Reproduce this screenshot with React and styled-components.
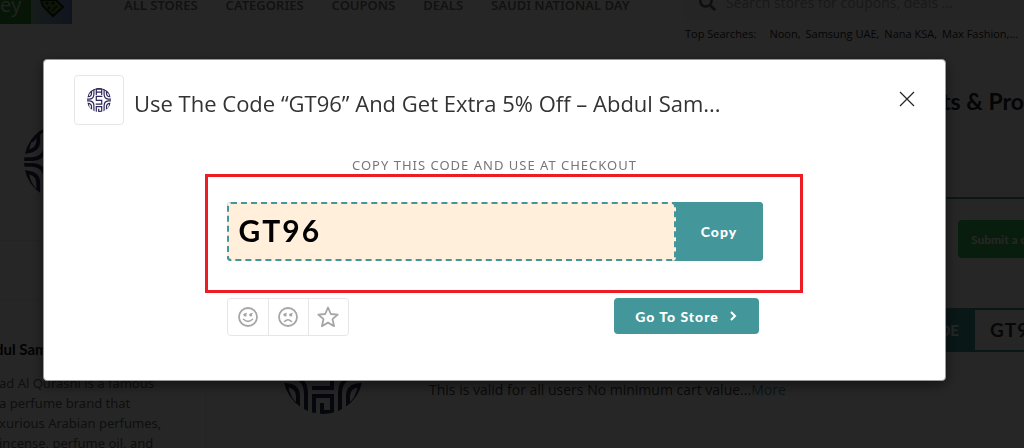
import React, { useState } from "react";
import styled, { createGlobalStyle } from "styled-components";
import { FaSearch } from "react-icons/fa";

const navLinks = ["All Stores", "Categories", "Coupons", "Deals", "Saudi National Day"];
const topSearches = ["Noon,", "Samsung UAE,", "Nana KSA,", "Max Fashion,..."];
const aboutLines = [
  "ad Al Qurashi is a famous",
  "a perfume brand that",
  "xurious Arabian perfumes,",
  "incense, perfume oil, and",
];

function Emblem({ size }) {
  const petals = "M0 43 H9 Q23 44 23 60 V80 M3 51 Q15 52 15 62 V73 Q5 65 3 51 Z";
  return (
    <svg width={size} height={size} viewBox="0 0 80 80" fill="none" stroke="#2d2858" strokeWidth="4" aria-hidden="true">
      <clipPath id={"round" + size}>
        <circle cx="40" cy="40" r="40" />
      </clipPath>
      <g clipPath={`url(#round${size})`}>
        <path d={petals} />
        <path d={petals} transform="matrix(-1 0 0 1 80 0)" />
        <path d={petals} transform="matrix(1 0 0 -1 0 80)" />
        <path d={petals} transform="matrix(-1 0 0 -1 80 80)" />
        <path d="M31 23 V4 H49 V23 M31 14 H49" />
        <path d="M51 28 H31 V41 H49 V54 H29" />
        <path d="M31 80 V62 H49 V78 H39 V69" />
        <path d="M8 18 A39 39 0 0 1 72 18" />
      </g>
    </svg>
  );
}

function Face({ sad }) {
  return (
    <svg width="20" height="20" viewBox="0 0 20 20" fill="none" stroke="#a6a6a6" aria-hidden="true">
      <circle cx="10" cy="10" r="9" strokeWidth="1.8" />
      <circle cx="7.2" cy="8" r="1.5" fill="#a6a6a6" stroke="none" />
      <circle cx="12.8" cy="8" r="1.5" fill="#a6a6a6" stroke="none" />
      <path d="M5 8 L7 6.6 L9 6.2 M11 8 L13 6.6 L15 6.2" strokeWidth="0.8" />
      {sad ? (
        <path d="M6.5 14.5 Q10 11 13.5 14.5" strokeWidth="1.5" strokeLinecap="round" />
      ) : (
        <path d="M5.5 12.2 Q10 16.5 14.5 12.2" strokeWidth="1.5" strokeLinecap="round" />
      )}
    </svg>
  );
}

function App() {
  const [vote, setVote] = useState(null);
  const code = "GT96";

  const copyCode = () => {
    navigator.clipboard.writeText(code);
  };

  return (
    <>
      <GlobalStyle />
      <Page>
        <Header>
          <Logo>
            <LogoName>ey</LogoName>
            <LogoTag>
              <svg width="26" height="18" viewBox="0 0 26 18" aria-hidden="true">
                <path d="M2 0 L4 6 L14 16 L24 7 L17 0 Z" fill="#5c8f38" stroke="#14240c" strokeWidth="2" />
                <circle cx="8" cy="3" r="1.6" fill="#14240c" />
                <circle cx="14" cy="3" r="1.6" fill="#14240c" />
                <circle cx="10" cy="8" r="1.4" fill="#14240c" />
                <path d="M13 11 L18 6" stroke="#14240c" strokeWidth="1.5" />
              </svg>
            </LogoTag>
          </Logo>
          <Nav>
            {navLinks.map((item) => (
              <NavLink key={item} href="#">{item}</NavLink>
            ))}
          </Nav>
          <SearchArea>
            <SearchBox>
              <FaSearch size={17} color="#666" />
              <SearchInput aria-label="Search" placeholder="Search stores for coupons, deals ..." />
            </SearchBox>
            <TopSearches>
              <TopLabel>Top Searches:</TopLabel>
              {topSearches.map((item) => (
                <a key={item} href="#">{item}</a>
              ))}
            </TopSearches>
          </SearchArea>
        </Header>

        <Content>
          <Sidebar>
            <StoreLogo><Emblem size={76} /></StoreLogo>
            <StoreTabs />
            <AboutTitle>dul Sam</AboutTitle>
            {aboutLines.map((line) => (
              <AboutLine key={line}>{line}</AboutLine>
            ))}
          </Sidebar>
          <Main>
            <MainTitle>ts &amp; Pro</MainTitle>
            <Toolbar>
              <SubmitButton>Submit a coupon</SubmitButton>
            </Toolbar>
            <Offer>
              <OfferLogo><Emblem size={80} /></OfferLogo>
              <OfferBody>
                <ShowCode>
                  <ShowLabel>CODE</ShowLabel>
                  <ShowValue>GT96</ShowValue>
                </ShowCode>
                <OfferText>
                  This is valid for all users No minimum cart value...<MoreLink href="#">More</MoreLink>
                </OfferText>
              </OfferBody>
            </Offer>
          </Main>
        </Content>
      </Page>

      <Backdrop>
        <Modal role="dialog" aria-labelledby="coupon-title">
          <ModalHeader>
            <ModalLogo><Emblem size={24} /></ModalLogo>
            <ModalTitle id="coupon-title">Use The Code “GT96” And Get Extra 5% Off – Abdul Sam...</ModalTitle>
            <CloseButton aria-label="Close">
              <svg width="16" height="16" viewBox="0 0 16 16" stroke="#222" strokeWidth="1.2" aria-hidden="true">
                <path d="M1 1 L15 15 M15 1 L1 15" />
              </svg>
            </CloseButton>
          </ModalHeader>
          <Hint htmlFor="coupon-code">Copy this code and use at checkout</Hint>
          <CodeRow>
            <CodeInput id="coupon-code" value={code} readOnly />
            <CopyButton onClick={copyCode}>Copy</CopyButton>
            <Highlight />
          </CodeRow>
          <Actions>
            <Votes>
              <VoteButton aria-label="Worked" aria-pressed={vote === "up"} onClick={() => setVote("up")}>
                <Face />
              </VoteButton>
              <VoteButton aria-label="Did not work" aria-pressed={vote === "down"} onClick={() => setVote("down")}>
                <Face sad />
              </VoteButton>
              <VoteButton aria-label="Save" aria-pressed={vote === "save"} onClick={() => setVote("save")}>
                <svg width="22" height="22" viewBox="0 0 22 22" fill="none" stroke="#a6a6a6" strokeWidth="1.8" strokeLinejoin="round" aria-hidden="true">
                  <path d="M11 1.5 L13.8 8 L20.7 8.6 L15.5 13.2 L17.1 20.2 L11 16.6 L4.9 20.2 L6.5 13.2 L1.3 8.6 L8.2 8 Z" />
                </svg>
              </VoteButton>
            </Votes>
            <StoreButton href="#">
              Go To Store
              <svg width="8" height="10" viewBox="0 0 8 10" fill="none" stroke="#fff" strokeWidth="2" aria-hidden="true">
                <path d="M2 1 L6 5 L2 9" />
              </svg>
            </StoreButton>
          </Actions>
        </Modal>
      </Backdrop>
    </>
  );
}

export default App;

const GlobalStyle = createGlobalStyle`
  * {
    box-sizing: border-box;
  }

  body {
    margin: 0;
    overflow: hidden;
    background: #fff;
    font-family: "Open Sans", sans-serif;
  }

  a {
    color: inherit;
    text-decoration: none;
  }

  button {
    border: none;
    padding: 0;
    cursor: pointer;
  }
`;

/* the page runs a little past the right edge of the window */
const Page = styled.div`
  width: calc(100% + 56px);
  height: 100vh;
  overflow: hidden;
`;

const Header = styled.header`
  display: flex;
  align-items: flex-start;
  height: 52px;
`;

const Logo = styled.div`
  display: flex;
  width: 72px;
  height: 24px;
`;

const LogoName = styled.div`
  width: 31px;
  background: #2c8c2c;
  color: #ddd;
  font-size: 20px;
  line-height: 10px;
`;

const LogoTag = styled.div`
  display: flex;
  flex: 1;
  align-items: flex-start;
  justify-content: center;
  background: linear-gradient(90deg, #8fbfae, #6f86c8);
`;

const Nav = styled.nav`
  display: flex;
  flex: 1;
  gap: 28px;
  padding-left: 52px;
`;

const NavLink = styled.a`
  color: #777;
  font-family: "Noto Sans", sans-serif;
  font-size: 13px;
  font-weight: 600;
  line-height: 10px;
  text-transform: uppercase;
  white-space: nowrap;
`;

const SearchArea = styled.div`
  width: 395px;
`;

const SearchBox = styled.div`
  display: flex;
  align-items: center;
  gap: 10px;
  height: 20px;
  padding: 0 14px 16px;
  background: #f4f4f4;
`;

const SearchInput = styled.input`
  flex: 1;
  border: none;
  padding: 0;
  background: none;
  font: 14px "Open Sans", sans-serif;

  &::placeholder {
    color: #a5a5a5;
  }
`;

const TopSearches = styled.div`
  display: flex;
  gap: 5px;
  padding-top: 5px;
  color: #222;
  font-size: 11px;
  line-height: 18px;
  white-space: nowrap;
`;

const TopLabel = styled.span`
  margin-right: 8px;
`;

const Content = styled.div`
  display: flex;
  gap: 22px;
`;

const Sidebar = styled.aside`
  width: 206px;
  border-right: 1px solid #f0f0f0;
  background: #fdfdfd;
  white-space: nowrap;
  overflow: hidden;
`;

const StoreLogo = styled.div`
  padding: 72px 0 0 24px;
  height: 188px;
`;

const StoreTabs = styled.div`
  height: 60px;
  border-top: 1px solid #f0f0f0;
  border-bottom: 1px solid #f0f0f0;
`;

const AboutTitle = styled.h3`
  margin: 39px 0 14px -5px;
  color: #111;
  font-family: Lato, sans-serif;
  font-size: 15px;
  font-weight: 700;
  line-height: 20px;
`;

const AboutLine = styled.div`
  margin-left: -1px;
  color: #666;
  font-family: "Noto Sans", sans-serif;
  font-size: 13px;
  line-height: 20px;
`;

const Main = styled.main`
  flex: 1;
`;

const MainTitle = styled.h1`
  margin: 0;
  height: 147px;
  padding: 34px 56px 0 0;
  border-bottom: 2px solid #43979a;
  color: #222;
  font-family: Lato, sans-serif;
  font-size: 23px;
  font-weight: 700;
  line-height: 30px;
  text-align: right;
`;

const Toolbar = styled.div`
  display: flex;
  justify-content: flex-end;
  padding: 21px 0;
`;

const SubmitButton = styled.button`
  width: 122px;
  height: 38px;
  padding-left: 13px;
  border-radius: 4px;
  background: #38c060;
  color: #fff;
  font-family: Lato, sans-serif;
  font-size: 12px;
  font-weight: 700;
  text-align: left;
  white-space: nowrap;
`;

const Offer = styled.article`
  display: flex;
  margin: 29px 0 0 20px;
`;

const OfferLogo = styled.div`
  width: 147px;
  padding: 26px 0 0 35px;
`;

const OfferBody = styled.div`
  flex: 1;
  padding-left: 34px;
`;

const ShowCode = styled.div`
  display: flex;
  width: 161px;
  height: 44px;
  margin-left: auto;
  border: 2px solid #43979a;
  font-family: Lato, sans-serif;
  font-weight: 700;
  line-height: 40px;
`;

const ShowLabel = styled.div`
  width: 54px;
  padding-right: 16px;
  background: #43979a;
  color: #fff;
  font-size: 15px;
  direction: rtl;
`;

const ShowValue = styled.div`
  padding-left: 15px;
  color: #333;
  font-size: 19px;
  letter-spacing: 1px;
`;

const OfferText = styled.p`
  margin: 28px 0 0;
  color: #444;
  font-size: 14px;
  line-height: 20px;
`;

const MoreLink = styled.a`
  color: #43979a;
`;

const Backdrop = styled.div`
  position: fixed;
  inset: 0;
  display: flex;
  align-items: flex-start;
  padding: 59px 78px 0 43px;
  background: rgba(0, 0, 0, 0.85);
`;

const Modal = styled.section`
  flex: 1;
  padding: 15px 30px 44px;
  border: 1px solid #999;
  border-radius: 4px;
  background: #fff;
  box-shadow: 0 4px 14px rgba(0, 0, 0, 0.5);
`;

const ModalHeader = styled.header`
  display: flex;
  align-items: center;
  gap: 10px;
`;

const ModalLogo = styled.div`
  display: flex;
  align-items: center;
  justify-content: center;
  width: 50px;
  height: 50px;
  border: 1px solid #e6e6e6;
  border-radius: 4px;
`;

const ModalTitle = styled.h2`
  flex: 1;
  margin: 6px 0 0;
  color: #333;
  font-size: 22px;
  font-weight: 400;
  line-height: 30px;
`;

const CloseButton = styled.button`
  display: flex;
  padding-bottom: 2px;
  background: none;
`;

const Hint = styled.label`
  display: block;
  margin: 30px 0 27px;
  color: #777;
  font-family: "Noto Sans", sans-serif;
  font-size: 13px;
  letter-spacing: 1px;
  line-height: 20px;
  text-align: center;
  text-transform: uppercase;
`;

const CodeRow = styled.div`
  position: relative;
  display: flex;
  max-width: 536px;
  height: 59px;
  margin: 0 auto;
  border-radius: 4px;
  background: #43979a;
`;

const CodeInput = styled.input`
  flex: 1;
  min-width: 0;
  padding: 0 10px 3px;
  border: 2px dashed #43979a;
  border-radius: 4px;
  background: #ffefdb;
  color: #000;
  font-family: Lato, sans-serif;
  font-size: 30px;
  font-weight: 700;
  letter-spacing: 2px;
`;

const CopyButton = styled.button`
  width: 87px;
  border-radius: 4px;
  background: #43979a;
  color: #fff;
  font-family: Lato, sans-serif;
  font-size: 14px;
  font-weight: 900;
  letter-spacing: 1px;
`;

/* red marker frame drawn round the code row */
const Highlight = styled.span`
  position: absolute;
  inset: -28px -40px -32px -22px;
  border: 3px solid #ed1c24;
  pointer-events: none;
`;

const Actions = styled.div`
  display: flex;
  align-items: flex-start;
  justify-content: space-between;
  max-width: 536px;
  margin: 37px auto 0;
  padding-right: 4px;
`;

const Votes = styled.div`
  display: flex;
  border: 1px solid #e6e6e6;
  border-radius: 4px;
`;

const VoteButton = styled.button`
  display: flex;
  align-items: center;
  justify-content: center;
  width: 40px;
  height: 36px;
  background: none;

  & + & {
    border-left: 1px solid #e6e6e6;
  }
`;

const StoreButton = styled.a`
  display: flex;
  align-items: center;
  justify-content: center;
  gap: 10px;
  width: 145px;
  height: 36px;
  border-radius: 4px;
  background: #43979a;
  color: #fff;
  font-family: Lato, sans-serif;
  font-size: 14px;
  font-weight: 900;
  letter-spacing: 1px;
`;
